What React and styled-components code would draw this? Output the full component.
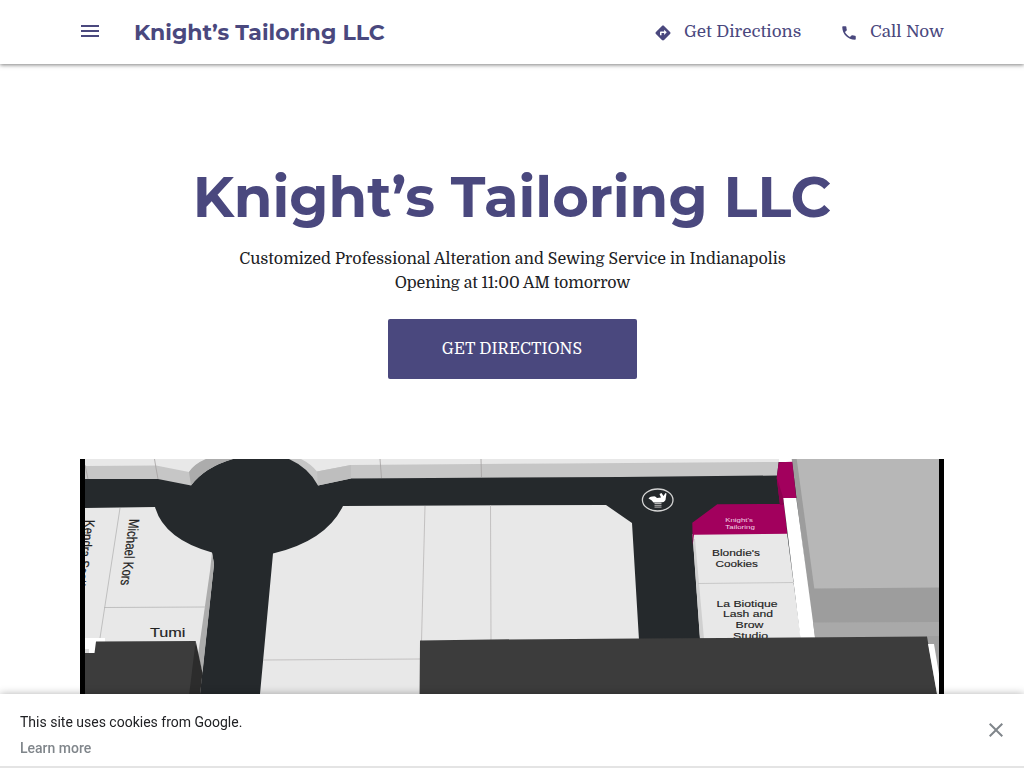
import React from 'react';
import styled, { createGlobalStyle } from 'styled-components';
import { MdMenu, MdDirections, MdClose } from 'react-icons/md';

const purple = '#4a487e';
const sans = `Montserrat, Inter, sans-serif`;
const serif = `Domine, 'DejaVu Serif Condensed', 'DejaVu Serif', serif`;

const GlobalStyle = createGlobalStyle`
	* {
		box-sizing: border-box;
	}
	body {
		margin: 0;
		background: #fff;
		color: #202124;
		overflow: hidden;
	}
	h1, p {
		margin: 0;
	}
`;

const Header = styled.header`
	display: flex;
	align-items: center;
	height: 64px;
	padding: 0 80px 0 78px;
	background: #fff;
	color: ${purple};
	box-shadow: 0 1px 4px rgba(0, 0, 0, 0.5);
`;

const MenuButton = styled.button`
	display: flex;
	padding: 0 0 2px;
	border: 0;
	background: none;
	color: inherit;
`;

const Brand = styled.a`
	margin: 2px 0 0 32px;
	font: 700 22px/32px ${sans};
	white-space: nowrap;
`;

const Actions = styled.nav`
	display: flex;
	gap: 40px;
	margin-left: auto;
`;

const Action = styled.a`
	display: flex;
	align-items: center;
	gap: 12px;
	font: 400 17px/24px ${serif};
	letter-spacing: ${p => p.$spacing || 'normal'};
	white-space: nowrap;

	svg {
		margin-top: 1px;
	}
	span {
		width: ${p => p.$width};
	}
`;

const Hero = styled.section`
	display: flex;
	flex-direction: column;
	align-items: center;
	padding-top: 97px;
	height: 395px;
	text-align: center;
`;

const Title = styled.h1`
	color: ${purple};
	font: 700 56px/72px ${sans};
	white-space: nowrap;
`;

const Tagline = styled.p`
	margin-top: ${p => p.$top || '0'};
	padding-left: 1px;
	font: 400 16px/24px ${serif};
	letter-spacing: ${p => p.$spacing || 'normal'};
	white-space: nowrap;
`;

const CallToAction = styled.button`
	width: 249px;
	height: 60px;
	margin-top: 24px;
	padding: 0;
	border: 0;
	border-radius: 2px;
	background: ${purple};
	color: #fff;
	font: 400 16px/24px ${serif};
	letter-spacing: 0.08px;
	text-transform: uppercase;
`;

const Cover = styled.div`
	height: 309px;
	padding: 0 80px;
	overflow: hidden;

	svg {
		display: block;
	}
`;

const CookieBar = styled.aside`
	position: fixed;
	left: 0;
	right: 0;
	bottom: 0;
	display: flex;
	justify-content: space-between;
	height: 74px;
	padding: 15px 16px 0 20px;
	background: #fff;
	border-bottom: 2px solid #e4e4e4;
	box-shadow: 0 0 8px rgba(0, 0, 0, 0.3);
	font: 400 14px/26px Roboto, sans-serif;
`;

const LearnMore = styled.a`
	color: #80868b;
	font-weight: 500;
`;

const CloseButton = styled.button`
	display: flex;
	align-self: flex-start;
	margin-top: 9px;
	padding: 0;
	border: 0;
	background: none;
	color: #80868b;
`;

const labels = [
	{ text: 'Tumi', x: 70, y: 178.3, size: 12.5, width: 35.5 },
	{ text: 'Blondie\'s', x: 632, y: 97.3, size: 9.5, width: 48 },
	{ text: 'Cookies', x: 635.5, y: 107.6, size: 9.5, width: 42.5 },
	{ text: 'La Biotique', x: 636.5, y: 147.5, size: 9.8, width: 61 },
	{ text: 'Lash and', x: 643, y: 158.2, size: 9.8, width: 50 },
	{ text: 'Brow', x: 655.5, y: 169, size: 9.8, width: 28 },
	{ text: 'Studio', x: 653, y: 179.6, size: 9.8, width: 35 },
	{ text: 'Knight\'s', x: 645.3, y: 62.8, size: 6.2, width: 27.5, fill: '#f3d9e8' },
	{ text: 'Tailoring', x: 645.3, y: 69.6, size: 6.2, width: 29.5, fill: '#f3d9e8' }
];

const PhoneIcon = () => (
	<svg width="18" height="18" viewBox="0 0 24 24" fill="currentColor">
		<path d="M6.620 10.790c1.440 2.830 3.760 5.140 6.590 6.590l2.200-2.200c.27-.27.67-.36 1.020-.24 1.120.37 2.330.57 3.570.57.55 0 1 .45 1 1V20c0 .55-.45 1-1 1-9.390 0-17-7.610-17-17 0-.55.45-1 1-1h3.500c.55 0 1 .45 1 1 0 1.250.2 2.450.57 3.570.11.35.03.74-.25 1.020l-2.200 2.200z" />
	</svg>
);

const MallMap = () => (
	<svg width="864" height="309" viewBox="0 0 864 309" fontFamily="'Liberation Sans', sans-serif" fill="#222">
		<rect width="864" height="309" fill="#25292c" />

		{/* upper shops */}
		<path d="M5 0H153Q125 8 111 26.500L78 20H5Z" fill="#c6c6c6" />
		<path d="M5 0H126Q114 6 109 13L76 6.500L5 7Z" fill="#e8e8e8" />
		<path d="M111 26.500L109 13Q114 5 126 0H153Q125 8 111 26.500Z" fill="#acacac" />
		<path d="M209 0Q229 9 238 26.500L271 19.500L540 18L697 16.500L699 0Z" fill="#c6c6c6" />
		<path d="M221 0Q231 5 237 12.500L271 6L480 4.500L699 3V0Z" fill="#e8e8e8" />
		<path d="M237 12.500L271 6V19.500L238 26.500Z" fill="#bebebe" />
		<path d="M74.500 0L76 9L78 20M5 6L8 20M300 0L301.500 19M401 0L401.500 18" fill="none" stroke="#a5a1a1" strokeWidth=".8" />

		{/* left block */}
		<path d="M5 49L75 48Q84 80 132 93.500L134 105L120 235H5Z" fill="#e8e8e8" />
		<path d="M132 93.500L134 105L122.500 214L118 196L130 112Z" fill="#acacac" />
		<path d="M40 49L20 179M24 148.500L126 148" fill="none" stroke="#b5b5b5" strokeWidth=".8" />

		{/* middle block */}
		<path d="M263 47L526 46L552 64L559 181L345 235H180L193 94.500Q246 82 263 47Z" fill="#e8e8e8" />
		<path d="M345 47L341.500 182M410.500 46L411 181M183 201L340 200" fill="none" stroke="#b9b6b6" strokeWidth=".8" />

		{/* right block */}
		<path d="M612.500 75L707 74L721 180H620Z" fill="#e8e8e8" />
		<path d="M613 80L615 80L624 180H620Z" fill="#d0d0d0" />
		<path d="M618 124.500L714 123.500" stroke="#c4c4c4" strokeWidth=".9" />
		<path d="M612.300 63.700L637.300 45.300L704 45L707.300 74.700L614 75.700L612.700 86Z" fill="#a2005d" />
		<path d="M699 0H713V3H699Z" fill="#fff" />
		<path d="M711.700 0H859V180H734Z" fill="#9d9d9d" />
		<path d="M698.700 3.300L712.300 2.700L716.300 39L703.300 40V46H700L696.700 19Z" fill="#a2005d" />
		<path d="M696.700 18L703.500 39.500V46H700Z" fill="#8d0050" />
		<path d="M703.300 39H716.300L735.300 180H720.500Z" fill="#fff" />
		<path d="M716.700 0H859V128.500L734.300 129.500Z" fill="#b7b7b7" />
		<path d="M733 163.500L859 163V181H735.300Z" fill="#a9a9a9" />
		<path d="M846 177H859V309H846Z" fill="#a0a0a0" />

		{labels.map(label => (
			<text
				key={label.text}
				x={label.x}
				y={label.y}
				fontSize={label.size}
				textLength={label.width}
				lengthAdjust="spacingAndGlyphs"
				fill={label.fill || '#222'}
				stroke={label.fill || '#222'}
				strokeWidth={label.fill ? 0 : 0.15}
			>
				{label.text}
			</text>
		))}
		{/* shop names running down the page, sheared with the map's perspective */}
		<g fontSize="14.500" stroke="#222" strokeWidth=".2">
			<text transform="matrix(-.135 .99 -1 0 49.500 60)" textLength="67" lengthAdjust="spacingAndGlyphs">Michael Kors</text>
			<text transform="matrix(-.135 .99 -1 0 5 61)" textLength="67" lengthAdjust="spacingAndGlyphs">Kendra Scott</text>
		</g>

		{/* play area marker */}
		<ellipse cx="577.700" cy="41" rx="15.300" ry="11" fill="none" stroke="#d4d4d4" strokeWidth="1.300" />
		<path d="M568.500 39.500Q570 37 573 37.500Q575 36.500 577 39L581 38.500L579.500 35L581.500 34L583.500 37L585.500 34L586.500 34.500L585.500 41Q584.500 43.500 580 43.500H573.500Q572 41 568.500 39.500Z" fill="#fff" />
		<path d="M574.500 44.500H581.500M574.500 46.300H581.500M574.500 48.100H581.500" stroke="#b5b5b5" strokeWidth="1" />

		{/* lower roofs */}
		<path d="M5 179H25V183L16 194H5Z" fill="#fff" />
		<path d="M5 190H9V194H5Z" fill="#ddd" />
		<path d="M5 194H14.500L16 182.500L115.700 182L112 309H5Z" fill="#3c3c3c" />
		<path d="M115.700 182L122.500 214L119 245L108 245Z" fill="#2c2c2c" />
		<path d="M340 181.500L411 180.500L559 179.500L847 177.500L857 235V309H339Z" fill="#3c3c3c" />
		<path d="M848 185H854L859 215V235H857Z" fill="#fff" />

		<path d="M0 0H5V309H0ZM859 0H864V309H859Z" fill="#000" />
	</svg>
);

const App = () => (
	<>
		<GlobalStyle />
		<Header>
			<MenuButton aria-label="Menu"><MdMenu size={24} /></MenuButton>
			<Brand>Knight’s Tailoring LLC</Brand>
			<Actions>
				<Action $width="116px">
					<MdDirections size={18} />
					<span>Get Directions</span>
				</Action>
				<Action $width="74px" $spacing="0.08px">
					<PhoneIcon />
					<span>Call Now</span>
				</Action>
			</Actions>
		</Header>
		<Hero>
			<Title>Knight’s Tailoring LLC</Title>
			<Tagline $top="14px">Customized Professional Alteration and Sewing Service in Indianapolis</Tagline>
			<Tagline $spacing="-0.1px">Opening at 11:00 AM tomorrow</Tagline>
			<CallToAction>Get directions</CallToAction>
		</Hero>
		<Cover>
			<MallMap />
		</Cover>
		<CookieBar>
			<div>
				<p>This site uses cookies from Google.</p>
				<LearnMore>Learn more</LearnMore>
			</div>
			<CloseButton aria-label="Close"><MdClose size={24} /></CloseButton>
		</CookieBar>
	</>
);

export default App;
